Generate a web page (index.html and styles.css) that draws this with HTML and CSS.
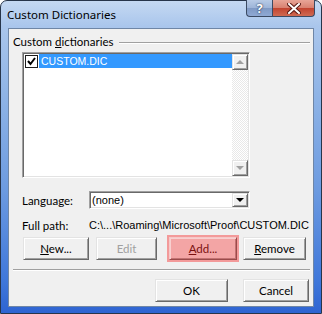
FILE: index.html
```html
<!DOCTYPE html>
<html lang="en">
<head>
    <meta charset="UTF-8" />
    <title>Custom Dictionaries</title>
    <link rel="stylesheet" href="styles.css">
</head>
<body>

<div class="window">
    <div class="titlebar">
        <span class="title">Custom Dictionaries</span>
        <div class="caption">
            <span class="cap help">?</span>
            <span class="cap close">
                <svg width="14" height="11" viewBox="0 0 14 11">
                    <path d="M2 1 L12 10 M12 1 L2 10" stroke="#5a1a14" stroke-width="4" stroke-linecap="square"/>
                    <path d="M2 1 L12 10 M12 1 L2 10" stroke="#fff" stroke-width="2" stroke-linecap="square"/>
                </svg>
            </span>
        </div>
    </div>

    <div class="client">
        <div class="group-head">
            <span>Custom <u>d</u>ictionaries</span>
            <span class="group-line"></span>
        </div>

        <div class="listbox">
            <div class="list-items">
                <div class="list-item">
                    <span class="check">
                        <svg width="9" height="9" viewBox="0 0 9 9"><path d="M1 4 L3.5 7 L8 1" stroke="#000" stroke-width="2" fill="none"/></svg>
                    </span>
                    <span class="item-text">CUSTOM.DIC</span>
                </div>
            </div>
            <div class="scrollbar">
                <span class="sb-btn"><span class="arrow-up"></span></span>
                <span class="sb-track"></span>
                <span class="sb-btn"><span class="arrow-down"></span></span>
            </div>
        </div>

        <div class="lang-row">
            <span class="label">Language:</span>
            <div class="combo">
                <span class="combo-text">(none)</span>
                <span class="combo-btn"><span class="arrow-down dark"></span></span>
            </div>
        </div>

        <div class="path-row">
            <span class="label">Full path:</span>
            <span class="path">C:\...\Roaming\Microsoft\Proof\CUSTOM.DIC</span>
        </div>

        <div class="buttons">
            <button class="btn btn-new"><u>N</u>ew...</button>
            <button class="btn btn-edit" disabled>Edit</button>
            <span class="marked"><button class="btn btn-add"><u>A</u>dd...</button></span>
            <button class="btn btn-remove"><u>R</u>emove</button>
        </div>

        <div class="separator"></div>

        <div class="footer">
            <button class="btn btn-ok">OK</button>
            <button class="btn btn-cancel">Cancel</button>
        </div>
    </div>
</div>

</body>
</html>
```

FILE: styles.css
```css
body {
    margin: 0;
    font-family: Lato, sans-serif;
    font-size: 11.5px;
    color: #000;
    background: #fff;
}
.window {
    width: 322px;
    height: 314px;
    box-sizing: border-box;
    border: 1px solid #27354a;
    border-radius: 7px 7px 0 0;
    background: linear-gradient(to bottom, #c5d9f2 0%, #aac6ec 8%, #8fb4e6 30%, #6d9be0 60%, #3f77da 90%, #2e64d2 100%);
    padding: 0 7px 6px 7px;
    display: flex;
    flex-direction: column;
}
.titlebar {
    height: 27px;
    display: flex;
    justify-content: space-between;
    align-items: flex-start;
}
.title {
    padding: 6px 0 0 0;
    margin-left: -1px;
    font-family: "Noto Sans", sans-serif;
    font-size: 11.5px;
    line-height: 16px;
    color: #000;
}
.caption {
    display: flex;
    margin-top: -1px;
    margin-right: -1px;
}
.cap {
    height: 17px;
    display: flex;
    align-items: center;
    justify-content: center;
    box-sizing: border-box;
    border: 1px solid #3b4a63;
    border-top: none;
}
.help {
    width: 26px;
    border-radius: 0 0 0 4px;
    border-right: none;
    background: linear-gradient(to bottom, #b8cbe6 0%, #9db4d8 50%, #7f99c4 51%, #8fa9d4 100%);
    color: #fff;
    font-family: "Noto Sans", sans-serif;
    font-weight: bold;
    font-size: 13px;
    text-shadow: 0 0 2px #2c3c5c, 0 0 1px #2c3c5c;
}
.close {
    width: 43px;
    border-radius: 0 0 4px 0;
    background: linear-gradient(to bottom, #e8a597 0%, #d8806f 50%, #c2432f 51%, #cf6a52 100%);
}
.client {
    flex: 1;
    background: #f0f0f0;
    border: 1px solid #6f86a6;
    padding: 6px 3px 0 4px;
    display: flex;
    flex-direction: column;
}
.group-head {
    height: 14px;
    display: flex;
    align-items: center;
    gap: 6px;
    line-height: 14px;
}
.group-line {
    flex: 1;
    height: 0;
    border-top: 1px solid #a0a0a0;
    border-bottom: 1px solid #fff;
    margin-top: 1px;
}
.listbox {
    margin: 3px 0 0 9px;
    width: 228px;
    height: 126px;
    box-sizing: border-box;
    border-top: 1px solid #a0a0a0;
    border-left: 1px solid #a0a0a0;
    border-right: 1px solid #fff;
    border-bottom: 1px solid #fff;
    box-shadow: inset 1px 1px 0 #696969, inset -1px -1px 0 #e3e3e3;
    background: #fff;
    display: flex;
    padding: 1px;
}
.list-items {
    flex: 1;
}
.list-item {
    display: flex;
    align-items: center;
    height: 14px;
    padding: 0 0 0 1px;
}
.check {
    width: 11px;
    height: 11px;
    border: 1px solid #1e1e1e;
    background: #fff;
    display: flex;
    align-items: center;
    justify-content: center;
    margin-right: 1px;
}
.item-text {
    flex: 1;
    height: 14px;
    background: #3399ff;
    color: #fff;
    font-family: "Liberation Sans", sans-serif;
    font-size: 10.5px;
    line-height: 14px;
    padding-left: 2px;
}
.scrollbar {
    width: 16px;
    display: flex;
    flex-direction: column;
}
.sb-btn {
    height: 16px;
    box-sizing: border-box;
    background: #f0f0f0;
    border: 1px solid;
    border-color: #e3e3e3 #696969 #696969 #e3e3e3;
    box-shadow: inset 1px 1px 0 #fff, inset -1px -1px 0 #a0a0a0;
    display: flex;
    align-items: center;
    justify-content: center;
}
.sb-track {
    flex: 1;
    background: repeating-conic-gradient(#fff 0 25%, #e8e8e8 0 50%) 0 0 / 2px 2px;
}
.arrow-up {
    width: 0;
    height: 0;
    border-left: 4px solid transparent;
    border-right: 4px solid transparent;
    border-bottom: 4px solid #a0a0a0;
}
.arrow-down {
    width: 0;
    height: 0;
    border-left: 4px solid transparent;
    border-right: 4px solid transparent;
    border-top: 4px solid #a0a0a0;
}
.arrow-down.dark {
    border-top-color: #000;
}
.lang-row {
    margin-top: 13px;
    padding-left: 9px;
    height: 18px;
    display: flex;
    align-items: center;
}
.label {
    width: 67px;
    flex: none;
}
.combo {
    width: 161px;
    height: 18px;
    box-sizing: border-box;
    border-top: 1px solid #a0a0a0;
    border-left: 1px solid #a0a0a0;
    border-right: 1px solid #fff;
    border-bottom: 1px solid #fff;
    box-shadow: inset 1px 1px 0 #696969, inset -1px -1px 0 #e3e3e3;
    background: #fff;
    display: flex;
    align-items: center;
    padding: 1px;
}
.combo-text {
    flex: 1;
    font-family: "Liberation Sans", sans-serif;
    font-size: 11px;
    padding-left: 1px;
}
.combo-btn {
    width: 16px;
    height: 14px;
    box-sizing: border-box;
    background: #f0f0f0;
    border: 1px solid;
    border-color: #e3e3e3 #696969 #696969 #e3e3e3;
    box-shadow: inset 1px 1px 0 #fff, inset -1px -1px 0 #a0a0a0;
    display: flex;
    align-items: center;
    justify-content: center;
}
.path-row {
    margin-top: 9px;
    padding-left: 9px;
    height: 14px;
    display: flex;
    align-items: center;
}
.path {
    font-family: "Liberation Sans", sans-serif;
    font-size: 11px;
    white-space: nowrap;
}
.buttons {
    margin-top: 5px;
    padding-left: 10px;
    height: 23px;
    display: flex;
    align-items: center;
}
.btn {
    height: 23px;
    box-sizing: border-box;
    font-family: Lato, sans-serif;
    font-size: 11.5px;
    color: #000;
    background: #f0f0f0;
    border: 1px solid;
    border-color: #e3e3e3 #696969 #696969 #e3e3e3;
    box-shadow: inset 1px 1px 0 #fff, inset -1px -1px 0 #a0a0a0;
    padding: 0;
    margin: 0;
}
.btn-new {
    width: 66px;
}
.btn-edit {
    width: 61px;
    margin-left: 7px;
    color: #a0a0a0;
}
.marked {
    margin-left: 10px;
    padding: 2px;
    background: #f39a9a;
    display: flex;
}
.btn-add {
    width: 68px;
    background: #f3a5a5;
    border-color: #f6c8c8 #9a4a4a #9a4a4a #f6c8c8;
    box-shadow: inset 1px 1px 0 #f8d0d0, inset -1px -1px 0 #c27272;
    color: #7a1010;
}
.btn-remove {
    width: 63px;
    margin-left: 4px;
}
.separator {
    margin: 9px 0 0 0;
    height: 0;
    border-top: 1px solid #a0a0a0;
    border-bottom: 1px solid #fff;
}
.footer {
    margin-top: 8px;
    padding-right: 1px;
    display: flex;
    justify-content: flex-end;
    gap: 15px;
}
.btn-ok {
    width: 73px;
}
.btn-cancel {
    width: 66px;
}
```
